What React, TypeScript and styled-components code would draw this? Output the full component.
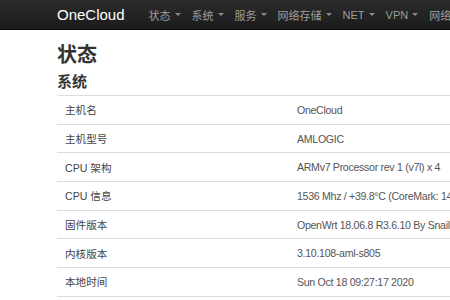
import styled, { createGlobalStyle } from "styled-components";

const GlobalStyle = createGlobalStyle`
    html, body {
        margin: 0;
        padding: 0;
        background: #fff;
        overflow: hidden;
        font-family: "Liberation Sans", "Noto Sans CJK SC", Arial, sans-serif;
    }
`;

const NavBar = styled.div`
    height: 29px;
    background: linear-gradient(#2c2c2c, #1b1b1b);
    border-bottom: 1px solid #0e0e0e;
    display: flex;
    align-items: center;
    padding-left: 57px;
    white-space: nowrap;
    overflow: hidden;
`;

const Brand = styled.div`
    color: #fff;
    font-size: 15px;
    margin-right: 24px;
    flex-shrink: 0;
`;

const NavItem = styled.div`
    color: #9d9d9d;
    font-size: 11px;
    margin-right: 11px;
    display: flex;
    align-items: center;
    flex-shrink: 0;
`;

const Caret = styled.span`
    display: inline-block;
    margin-left: 4px;
    border-left: 3px solid transparent;
    border-right: 3px solid transparent;
    border-top: 3px solid #8a8a8a;
`;

const Main = styled.div`
    padding: 11px 0 0 57px;
`;

const Title = styled.h1`
    margin: 0;
    font-size: 20px;
    font-weight: bold;
    color: #333;
    line-height: 28px;
`;

const SubTitle = styled.h2`
    margin: 2px 0 2px;
    font-size: 15px;
    font-weight: bold;
    color: #333;
    line-height: 22px;
`;

const Table = styled.div`
    width: 460px;
    border-top: 1px solid #ddd;
`;

const Row = styled.div`
    display: flex;
    height: 27.7px;
    align-items: center;
    border-bottom: 1px solid #ddd;
    font-size: 10.6px;
    color: #444;
    white-space: nowrap;
`;

const Label = styled.div`
    width: 232px;
    flex-shrink: 0;
    padding-left: 8px;
`;

const Value = styled.div`
    flex: 1;
    min-width: 0;
    overflow: hidden;
    color: #555;
    letter-spacing: -0.3px;
`;

const menu = ["状态", "系统", "服务", "网络存储", "NET", "VPN", "网络"];

const rows: [string, string][] = [
    ["主机名", "OneCloud"],
    ["主机型号", "AMLOGIC"],
    ["CPU 架构", "ARMv7 Processor rev 1 (v7l) x 4"],
    ["CPU 信息", "1536 Mhz / +39.8°C (CoreMark: 1485.148515)"],
    ["固件版本", "OpenWrt 18.06.8 R3.6.10 By Snail"],
    ["内核版本", "3.10.108-aml-s805"],
    ["本地时间", "Sun Oct 18 09:27:17 2020"],
];

const App: React.FC = () => {
    return (
        <>
            <GlobalStyle />
            <NavBar>
                <Brand>OneCloud</Brand>
                {menu.map((m) => (
                    <NavItem key={m}>
                        {m}
                        <Caret />
                    </NavItem>
                ))}
            </NavBar>
            <Main>
                <Title>状态</Title>
                <SubTitle>系统</SubTitle>
                <Table>
                    {rows.map(([k, v]) => (
                        <Row key={k}>
                            <Label>{k}</Label>
                            <Value>{v}</Value>
                        </Row>
                    ))}
                </Table>
            </Main>
        </>
    );
};

export default App;
